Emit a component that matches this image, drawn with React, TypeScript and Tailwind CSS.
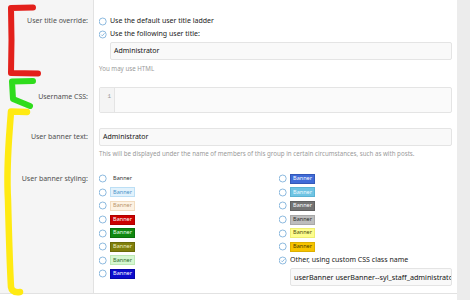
import React from 'react';

const font = { fontFamily: '"Noto Sans", "Liberation Sans", sans-serif' };

const Radio = ({ checked = false }: { checked?: boolean }) => (
  <svg width="8" height="9" viewBox="0 0 8 9" className="shrink-0">
    <circle cx="3.7" cy="4.5" r="3.5" fill="#fff" stroke="#8dbadf" strokeWidth="1" />
    {checked && <path d="M2.1 4.6 L3.3 5.8 L5.5 3.3" fill="none" stroke="#8dbadf" strokeWidth="1" />}
  </svg>
);

const leftBanners = [
  'bg-transparent border-transparent text-[#333]',
  'bg-[#e2f2fc] border-[#bcdff5] text-[#4d93c8]',
  'bg-[#fdf2e3] border-[#f2dcc0] text-[#b8946c]',
  'bg-[#cc0000] border-[#b00000] text-white',
  'bg-[#0f880f] border-[#0a700a] text-[#e6ffe6]',
  'bg-[#7f7f0c] border-[#6a6a08] text-[#f2f2c4]',
  'bg-[#d6f7d1] border-[#bde9b5] text-[#2f6a2f]',
  'bg-[#0b0bcc] border-[#0606a8] text-white',
];

const rightBanners = [
  'bg-[#3f6bd8] border-[#3358b8] text-white',
  'bg-[#6fc4e3] border-[#5ab3d4] text-[#eefaff]',
  'bg-[#737373] border-[#606060] text-white',
  'bg-[#bdbdbd] border-[#a8a8a8] text-[#2b2b2b]',
  'bg-[#fdfd8c] border-[#eeee70] text-[#4b4b10]',
  'bg-[#f6c300] border-[#ddaf00] text-[#4a3a00]',
];

const Chip = ({ cls }: { cls: string }) => (
  <span className={`w-[25px] h-[10px] border flex items-center justify-center text-[5.5px] leading-none ${cls}`}>
    Banner
  </span>
);

const Label = ({ text, pt }: { text: string; pt: string }) => (
  <div className={`w-[94px] shrink-0 bg-[#f5f5f5] border-r border-[#e2e2e2] text-right pr-[5px] ${pt}`}>
    <div className="h-[14px] leading-[14px] text-[7px] text-[#505050] whitespace-nowrap">{text}</div>
  </div>
);

const Annotations = () => (
  <svg width="60" height="300" viewBox="0 0 60 300" className="absolute left-0 top-0 pointer-events-none">
    <path d="M33 7.5 L11 8 L11.5 40 L11 73 L38 73.5" fill="none" stroke="#e3201b" strokeWidth="6" strokeLinecap="round" strokeLinejoin="round" />
    <path d="M33 81 L12 81.5 L13 99 L30 106" fill="none" stroke="#2fdc1c" strokeWidth="6" strokeLinecap="round" strokeLinejoin="round" />
    <path d="M27 112 L11 111.5 C9 140 6 165 8 200 C9 240 10 270 11 287 Q12 293 20 292" fill="none" stroke="#ffea12" strokeWidth="6.5" strokeLinecap="round" strokeLinejoin="round" />
  </svg>
);

export default function App() {
  return (
    <div className="w-[470px] h-[300px] flex bg-[#ececec] overflow-hidden relative" style={font}>
      <div className="w-[457px] h-full bg-white flex flex-col">
        <div className="flex flex-col border-b border-[#e2e2e2]">
          {/* user title override */}
          <div className="flex">
            <Label text="User title override:" pt="pt-[14px]" />
            <div className="flex-1 pl-[5px] pr-[5px] pt-[14px] pb-[7px]">
              <div className="h-[14px] flex items-center gap-[3px] text-[7px] text-[#222]">
                <Radio />
                <span>Use the default user title ladder</span>
              </div>
              <div className="h-[13px] flex items-center gap-[3px] text-[7px] text-[#222]">
                <Radio checked />
                <span>Use the following user title:</span>
              </div>
              <div className="ml-[11px] mt-[1px] h-[18px] bg-[#f9f9f9] border border-[#e4e4e4] rounded-[2px] flex items-center pl-[3px] text-[7px] text-[#141414]">
                Administrator
              </div>
              <div className="mt-[5px] h-[8px] leading-[8px] text-[6.2px] text-[#9a9a9a]">You may use HTML</div>
            </div>
          </div>

          {/* username css */}
          <div className="flex">
            <Label text="Username CSS:" pt="pt-[10px]" />
            <div className="flex-1 pl-[5px] pr-[5px] pt-[7px] pb-[7px]">
              <div className="h-[26px] flex border border-[#e4e4e4] rounded-[2px] bg-[#fafafa]">
                <div className="w-[15px] bg-[#f4f4f4] border-r border-[#e4e4e4] text-right pr-[3px] pt-[4px] leading-[9px] text-[6px] text-[#999]" style={{ fontFamily: '"Liberation Mono", monospace' }}>
                  1
                </div>
                <div className="flex-1" />
              </div>
            </div>
          </div>

          {/* user banner text */}
          <div className="flex">
            <Label text="User banner text:" pt="pt-[10px]" />
            <div className="flex-1 pl-[5px] pr-[5px] pt-[8px] pb-[7px]">
              <div className="h-[18px] bg-[#f9f9f9] border border-[#e4e4e4] rounded-[2px] flex items-center pl-[3px] text-[7px] text-[#141414]">
                Administrator
              </div>
              <div className="mt-[4px] h-[8px] leading-[8px] text-[6.2px] text-[#9a9a9a] whitespace-nowrap">
                This will be displayed under the name of members of this group in certain circumstances, such as with posts.
              </div>
            </div>
          </div>

          {/* user banner styling */}
          <div className="flex">
            <Label text="User banner styling:" pt="pt-[7px]" />
            <div className="flex-1 pl-[5px] pr-[5px] pt-[7px] pb-[7px] grid grid-cols-[180px_1fr]">
              <div className="flex flex-col">
                {leftBanners.map((c, i) => (
                  <div key={i} className="h-[13.6px] flex items-center gap-[3px]">
                    <Radio />
                    <Chip cls={c} />
                  </div>
                ))}
              </div>
              <div className="flex flex-col min-w-0">
                {rightBanners.map((c, i) => (
                  <div key={i} className="h-[13.6px] flex items-center gap-[3px]">
                    <Radio />
                    <Chip cls={c} />
                  </div>
                ))}
                <div className="h-[13.6px] flex items-center gap-[3px] text-[7px] text-[#222] whitespace-nowrap">
                  <Radio checked />
                  <span>Other, using custom CSS class name</span>
                </div>
                <div className="ml-[11px] mt-[1px] h-[17.5px] bg-[#f9f9f9] border border-[#e4e4e4] rounded-[2px] flex items-center pl-[3px] text-[7.2px] text-[#141414] overflow-hidden whitespace-nowrap">
                  userBanner userBanner--syl_staff_administrator
                </div>
              </div>
            </div>
          </div>
        </div>
        <div className="flex-1 bg-white" />
      </div>
      <Annotations />
    </div>
  );
}
